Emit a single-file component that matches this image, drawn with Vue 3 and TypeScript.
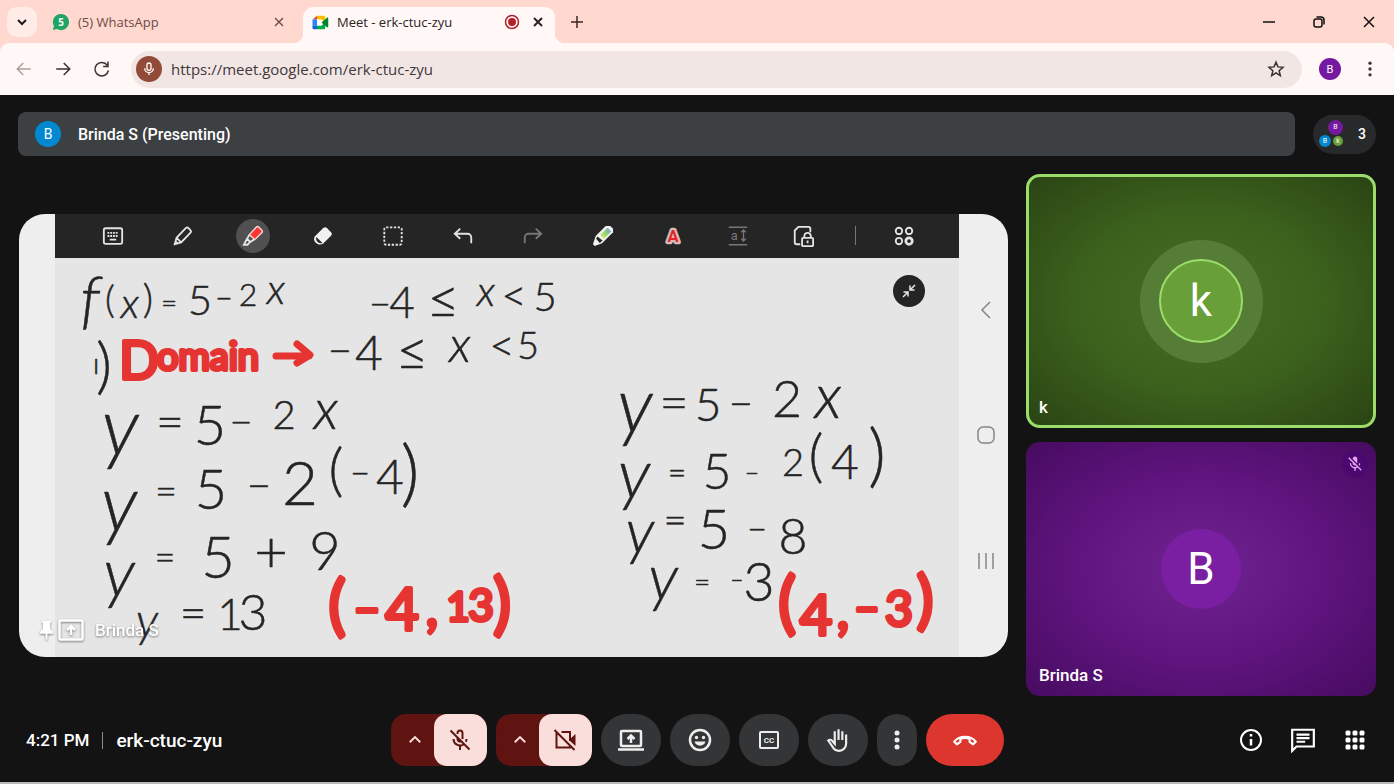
<script setup lang="ts">
import { ref } from 'vue'

type Glyph = [text: string, x: number, y: number, size: number]

const address = ref('https://meet.google.com/erk-ctuc-zyu')

// Pen strokes of the board: character, centre, baseline, size
const ink: Glyph[] = [
  ['f', 90, 322, 64], ['(', 110, 313, 38], ['x', 130, 318, 42], [')', 148, 313, 40], ['=', 169, 313, 28],
  ['5', 200, 315, 42], ['−', 224, 309, 30], ['2', 248, 306, 32], ['x', 276, 304, 42],
  ['−', 380, 317, 38], ['4', 402, 318, 44], ['≤', 443, 318, 56], ['x', 486, 306, 42], ['<', 514, 311, 44], ['5', 545, 311, 40],
  ['ı', 96, 374, 30], [')', 104, 387, 62],
  ['−', 340, 365, 42], ['4', 369, 370, 48], ['≤', 412, 370, 56], ['x', 460, 362, 50], ['<', 502, 361, 44], ['5', 528, 359, 38],
  ['y', 120, 455, 80], ['=', 170, 438, 48], ['5', 210, 445, 56], ['−', 241, 436, 40], ['2', 284, 429, 40], ['x', 326, 429, 56],
  ['y', 119, 531, 78], ['=', 166, 504, 38], ['5', 211, 509, 56], ['−', 259, 500, 42], ['2', 300, 505, 62],
  ['(', 336, 490, 58], ['−', 360, 485, 34], ['4', 390, 494, 48], [')', 410, 498, 72],
  ['y', 119, 596, 68], ['=', 165, 570, 36], ['5', 218, 578, 58], ['+', 271, 572, 58], ['9', 325, 570, 54],
  ['y', 147, 637, 48], ['=', 193, 629, 46], ['1', 230, 630, 44], ['3', 253, 630, 50],
  ['y', 635, 432, 76], ['=', 674, 420, 50], ['5', 708, 421, 46], ['−', 741, 418, 42], ['2', 787, 417, 52], ['x', 828, 418, 62],
  ['y', 634, 498, 70], ['=', 677, 484, 32], ['5', 717, 489, 50], ['−', 752, 481, 24], ['2', 793, 476, 38],
  ['(', 816, 476, 58], ['4', 845, 479, 48], [')', 877, 479, 68],
  ['y', 640, 553, 62], ['=', 675, 534, 40], ['5', 714, 549, 56], ['−', 757, 541, 34], ['8', 793, 554, 50],
  ['y', 663, 600, 64], ['=', 702, 592, 28], ['−', 737, 588, 22], ['3', 759, 601, 54],
]

const marker: Glyph[] = [
  ['D', 139, 379, 52], ['omain', 208, 370, 38],
  ['(', 337, 628, 66], ['−', 367, 626, 44], ['4', 402, 630, 58], [',', 432, 626, 54], ['1', 458, 621, 40], ['3', 481, 621, 44], [')', 502, 627, 68],
  ['(', 787, 626, 68], ['4', 816, 635, 56], [',', 843, 629, 54], ['−', 867, 624, 42], ['3', 899, 626, 48], [')', 925, 622, 64],
]

const cursive = (t: string): boolean => t === 'x' || t === 'y' || t === 'f'
const dots = [5, 12, 19]
</script>

<template>
  <div class="window">
    <header class="tabs">
      <button class="tab-search" aria-label="Search tabs">
        <svg viewBox="0 0 24 24" class="i16"><path d="M6 9l6 6 6-6" class="ln w3" /></svg>
      </button>
      <div class="tab">
        <svg viewBox="0 0 20 20" class="i18"><path d="M10 1a9 9 0 1 1-4.400 16.900L1 19l1.200-4.500A9 9 0 0 1 10 1z" fill="#1fa463" /><text x="10" y="14" class="badge-num">5</text></svg>
        <span class="tab-title">(5) WhatsApp</span>
        <button class="plain" aria-label="Close WhatsApp"><svg viewBox="0 0 24 24" class="i16"><path d="M6 6l12 12M18 6L6 18" class="ln" /></svg></button>
      </div>
      <div class="tab active">
        <svg viewBox="0 0 24 20" class="meet-logo">
          <path d="M2 6l6-5v5z" fill="#ea4335" /><path d="M8 1h9a2 2 0 0 1 2 2v7l-5-4H8z" fill="#fbbc04" />
          <path d="M2 6h6v8H2z" fill="#2684fc" /><path d="M2 14h6v5H4a2 2 0 0 1-2-2z" fill="#0066da" />
          <path d="M8 14h6l5-4v7a2 2 0 0 1-2 2H8z" fill="#00ac47" /><path d="M14 10l7-6c1-1 2-.5 2 .7v10.600c0 1.200-1 1.700-2 .7z" fill="#00832d" /><path d="M8 6h6v8H8z" fill="#fff" />
        </svg>
        <span class="tab-title">Meet - erk-ctuc-zyu</span>
        <svg viewBox="0 0 16 16" class="i16 rec"><circle cx="8" cy="8" r="6.500" fill="none" stroke="#b3202c" stroke-width="1.500" /><circle cx="8" cy="8" r="4" fill="#b3202c" /></svg>
        <button class="plain" aria-label="Close Meet"><svg viewBox="0 0 24 24" class="i16"><path d="M6 6l12 12M18 6L6 18" class="ln w3" /></svg></button>
      </div>
      <button class="plain new-tab" aria-label="New tab"><svg viewBox="0 0 24 24" class="i18"><path d="M12 4v16M4 12h16" class="ln" /></svg></button>
      <div class="win-controls">
        <button class="plain" aria-label="Minimize"><svg viewBox="0 0 16 16" class="i16"><path d="M2 8h12" class="ln thin" /></svg></button>
        <button class="plain" aria-label="Restore"><svg viewBox="0 0 16 16" class="i16"><rect x="3" y="5" width="8" height="8" rx="2" class="ln thin" /><path d="M5.500 3H10a3 3 0 0 1 3 3v4.500" class="ln thin" /></svg></button>
        <button class="plain" aria-label="Close window"><svg viewBox="0 0 16 16" class="i16"><path d="M3 3l10 10M13 3L3 13" class="ln thin" /></svg></button>
      </div>
    </header>

    <nav class="toolbar">
      <button class="plain faded" aria-label="Back"><svg viewBox="0 0 24 24" class="i18"><path d="M21 12H4M11 4l-8 8 8 8" class="ln" /></svg></button>
      <button class="plain" aria-label="Forward"><svg viewBox="0 0 24 24" class="i18"><path d="M3 12h17M13 4l8 8-8 8" class="ln" /></svg></button>
      <button class="plain" aria-label="Reload"><svg viewBox="0 0 24 24" class="i18"><path d="M19 7a9 9 0 1 0 1.500 7M20 2v6.500h-6.500" class="ln" /></svg></button>
      <div class="address">
        <button class="mic-chip" aria-label="Microphone in use"><svg viewBox="0 0 24 24" class="i18"><rect x="9" y="3" width="6" height="11" rx="3" class="ln" /><path d="M5.500 11a6.500 6.500 0 0 0 13 0M12 17.500V21" class="ln" /></svg></button>
        <input v-model="address" type="text" aria-label="Address" />
        <button class="plain" aria-label="Bookmark"><svg viewBox="0 0 24 24" class="i18"><path d="M12 3l2.600 6.200 6.700.6-5.100 4.400 1.500 6.600-5.700-3.500-5.700 3.500 1.500-6.600-5.100-4.400 6.700-.6z" class="ln" /></svg></button>
      </div>
      <button class="profile" aria-label="Profile">B</button>
      <button class="plain" aria-label="Browser menu"><svg viewBox="0 0 24 24" class="i20 solid"><circle v-for="d in dots" :key="d" cx="12" :cy="d" r="2" /></svg></button>
    </nav>

    <main class="meet">
      <div class="top">
        <div class="presenting"><span class="face">B</span><span>Brinda S (Presenting)</span></div>
        <button class="people">
          <span class="cluster"><i class="c1">B</i><i class="c2">B</i><i class="c3">k</i></span>
          <span>3</span>
        </button>
      </div>

      <div class="content">
        <section class="stage">
          <div class="screen">
            <div class="board">
              <div class="tools">
                <button class="plain" aria-label="Keyboard"><svg viewBox="0 0 24 24" class="i24"><rect x="2" y="3.500" width="20" height="17" rx="2" class="ln" /><path d="M6 8.500h12M6 12h12" class="ln dash" /><path d="M8.500 16h7" class="ln" /></svg></button>
                <button class="plain" aria-label="Pen"><svg viewBox="0 0 24 24" class="i24"><path d="M3 21l2-7L15 3.500c1-1 2-1 3 0l2 2c1 1 1 2 0 3L10 19zM5 14l5 5M3.500 20l2-2" class="ln" /></svg></button>
                <button class="plain picked" aria-label="Highlighter"><svg viewBox="0 0 24 24" class="i24"><path d="M8 10.500l7.500-8c1-1 2-1 3 0l3 3c1 1 1 2 0 3L14 16z" fill="#ff3433" stroke="#f4dada" stroke-width="1.500" /><path d="M8 11l-2.500 4 3.500 3.500 4.500-3M5.500 15L2 21.500h4l3-3" class="ln" /></svg></button>
                <button class="plain" aria-label="Eraser"><svg viewBox="0 0 24 24" class="i24"><path d="M3 12.500L12 3.500c1.500-1.500 3-1.500 4.500 0l4 4c1.500 1.500 1.500 3 0 4.500L12 20.500c-5.500 3-12-3-9-8z" fill="#f1f1f1" /><path d="M4.800 13l6.500 6.500c-4 1.500-8-2.500-6.500-6.500z" fill="#252525" /></svg></button>
                <button class="plain" aria-label="Select"><svg viewBox="0 0 24 24" class="i24"><rect x="2.500" y="2.500" width="19" height="19" rx="2" class="ln" stroke-dasharray="2.500 1.700" /></svg></button>
                <button class="plain" aria-label="Undo"><svg viewBox="0 0 24 24" class="i24"><path d="M9 4L3 9.500 9 15M3 9.500h14a4 4 0 0 1 4 4V20" class="ln" /></svg></button>
                <button class="plain dim" aria-label="Redo"><svg viewBox="0 0 24 24" class="i24"><path d="M15 4l6 5.500-6 5.500M21 9.500H7a4 4 0 0 0-4 4V20" class="ln" /></svg></button>
                <button class="plain" aria-label="Straighten"><svg viewBox="0 0 24 24" class="i24">
                  <defs><linearGradient id="tip" x1="0" y1="1" x2="1" y2="0"><stop offset="0" stop-color="#e5f36a" /><stop offset=".5" stop-color="#8ed66b" /><stop offset="1" stop-color="#7c8cff" /></linearGradient></defs>
                  <path d="M1 21l3-9L13 3l2-2h5l3 3v4L11 20l-8 3z" fill="#f1f1f1" /><path d="M9 11l8-8 4 4-8 8z" fill="url(#tip)" /><path d="M6 12.500l5.500 4.500-3 2.500L4.500 15z" fill="#252525" /></svg></button>
                <button class="plain" aria-label="Text style"><svg viewBox="0 0 24 24" class="i24"><text x="12" y="19" class="letter-a">A</text></svg></button>
                <button class="plain dim" aria-label="Align text"><svg viewBox="0 0 24 24" class="i24"><path d="M2 2.500h20M2 21.500h20M18 6v11M15.500 8L18 5.500 20.500 8M15.500 15l2.500 2.500 2.500-2.500" class="ln thin" /><text x="8" y="16" class="small-a">a</text></svg></button>
                <button class="plain" aria-label="Lock page"><svg viewBox="0 0 24 24" class="i24"><path d="M20 8V4a2 2 0 0 0-2-2H7L3 6v13a2 2 0 0 0 2 2h4" class="ln" /><rect x="11" y="14" width="12" height="9" rx="1" class="ln" /><path d="M13.500 14v-2a3.500 3.500 0 0 1 7 0v2M17 17v3" class="ln" /></svg></button>
                <span class="rule"></span>
                <button class="plain" aria-label="More tools"><svg viewBox="0 0 24 24" class="i24"><circle cx="6.500" cy="6.500" r="3.500" class="ln" /><circle cx="17.500" cy="6.500" r="3.500" class="ln" /><circle cx="6.500" cy="17.500" r="3.500" class="ln" /><circle cx="17.500" cy="17.500" r="3.500" class="ln w3" /></svg></button>
              </div>
              <svg class="canvas" viewBox="55 258 904 399">
                <g class="ink"><text v-for="(g, i) in ink" :key="i" :x="g[1]" :y="g[2]" :font-size="g[3]" :class="{ cursive: cursive(g[0]) }">{{ g[0] }}</text></g>
                <g class="marker">
                  <text v-for="(g, i) in marker" :key="i" :x="g[1]" :y="g[2]" :font-size="g[3]">{{ g[0] }}</text>
                  <path d="M276 356h33M297 344l13 11-13 8" />
                </g>
                <circle cx="909" cy="291" r="16" fill="#242424" />
                <path d="M915 285l-5 5m0-4.500v4.500h4.500M903 297l5-5m0 4.500V292h-4.500" fill="none" stroke="#e8e8e8" stroke-width="1.500" />
              </svg>
            </div>
            <div class="phone-nav">
              <button class="plain" aria-label="Back"><svg viewBox="0 0 24 24" class="i24"><path d="M16 4l-8 8 8 8" class="ln thin" /></svg></button>
              <button class="plain" aria-label="Home"><svg viewBox="0 0 24 24" class="i24"><rect x="4" y="4" width="16" height="16" rx="5" class="ln thin" /></svg></button>
              <button class="plain" aria-label="Recent apps"><svg viewBox="0 0 24 24" class="i24"><path d="M5 4v16M12 4v16M19 4v16" class="ln thin" /></svg></button>
            </div>
            <div class="caption">
              <svg viewBox="0 0 16 24" class="pin"><path d="M3 2h10v2h-1v7l3 3v2H9v6l-1 1-1-1v-6H1v-2l3-3V4H3z" fill="#fff" /></svg>
              <svg viewBox="0 0 26 22" class="cast"><rect x="1.500" y="1.500" width="23" height="19" rx="1" class="ln w25" /><path d="M13 16V8M9 11l4-4 4 4" class="ln w25" /></svg>
              <span>Brinda S</span>
            </div>
          </div>
        </section>
        <aside class="tiles">
          <article class="tile green"><div class="halo"><span class="avatar">k</span></div><p>k</p></article>
          <article class="tile violet">
            <span class="avatar">B</span><p>Brinda S</p>
            <span class="muted"><svg viewBox="0 0 24 24" class="i18 solid"><path d="M19 11h-1.700c0 .74-.16 1.430-.43 2.050l1.230 1.230c.56-.98.9-2.090.9-3.280zm-4.020.17c0-.06.02-.11.02-.17V5c0-1.660-1.340-3-3-3S9 3.340 9 5v.18l5.980 5.990zM4.270 3L3 4.270l6.010 6.010V11c0 1.660 1.330 3 2.990 3 .22 0 .44-.03.65-.08l1.660 1.660c-.71.33-1.500.52-2.310.52-2.760 0-5.300-2.100-5.300-5.100H5c0 3.410 2.720 6.230 6 6.720V21h2v-3.280c.91-.13 1.770-.45 2.540-.9L19.730 21 21 19.730 4.270 3z" /></svg></span>
          </article>
        </aside>
      </div>

      <footer class="bar">
        <div class="info"><span>4:21 PM</span><span class="sep"></span><span class="code">erk-ctuc-zyu</span></div>
        <div class="controls">
          <div class="split">
            <button class="more-opt" aria-label="Audio settings"><svg viewBox="0 0 24 24" class="i18"><path d="M5 15l7-7 7 7" class="ln w25" /></svg></button>
            <button class="off" aria-label="Turn on microphone"><svg viewBox="0 0 24 24" class="i24"><path d="M9.500 6V5a2.500 2.500 0 0 1 5 0v6M9.500 9.500V11a2.500 2.500 0 0 0 3.500 2.300M5.500 11a6.500 6.500 0 0 0 10 5.500M18.500 11c0 1-.3 2-.7 2.800M12 17.500V22M2.500 2.500l19 19" class="ln" /></svg></button>
          </div>
          <div class="split">
            <button class="more-opt" aria-label="Video settings"><svg viewBox="0 0 24 24" class="i18"><path d="M5 15l7-7 7 7" class="ln w25" /></svg></button>
            <button class="off" aria-label="Turn on camera"><svg viewBox="0 0 24 24" class="i24"><path d="M8.500 4H17v9M3.500 4v15.500H17V18M1.500 2l20 20" class="ln" /><path d="M17 11l5.500-5v12L17 13z" fill="currentColor" /></svg></button>
          </div>
          <button class="round" aria-label="Present now"><svg viewBox="0 0 28 24" class="wide"><rect x="4" y="3" width="20" height="15" rx="1" class="ln w25" /><path d="M14 15V8M10.500 11L14 7.500l3.500 3.500M1 21.500h26" class="ln w25" /></svg></button>
          <button class="round" aria-label="Reactions"><svg viewBox="0 0 24 24" class="i24"><circle cx="12" cy="12" r="10" class="ln w25" /><circle cx="8.500" cy="9.500" r="1.700" fill="currentColor" /><circle cx="15.500" cy="9.500" r="1.700" fill="currentColor" /><path d="M6.500 13.500h11c-1 5.500-10 5.500-11 0z" fill="currentColor" /></svg></button>
          <button class="round" aria-label="Captions"><svg viewBox="0 0 24 24" class="i24"><rect x="3" y="4" width="18" height="16" rx="1" class="ln" /><text x="12" y="15" class="cc">CC</text></svg></button>
          <button class="round" aria-label="Raise hand"><svg viewBox="0 0 24 24" class="i26"><path d="M9 12V4M12.500 12V2M16 12V4M19.500 7v8.500a6.500 6.500 0 0 1-6.500 6.500c-3.300 0-5-1.700-6.200-4L3 12.500c1.500-1.300 3-.8 4 .7l2 2.300V4" class="ln" /></svg></button>
          <button class="round slim" aria-label="More options"><svg viewBox="0 0 24 24" class="i24 solid"><circle v-for="d in dots" :key="d" cx="12" :cy="d" r="2.500" /></svg></button>
          <button class="round leave" aria-label="Leave call"><svg viewBox="0 0 24 24" class="i26"><path d="M2 13.500C7 7.500 17 7.500 22 13.500L19.500 16l-3.200-2.200V11c-2.500-1-6.100-1-8.600 0v2.800L4.500 16z" class="ln" stroke-linejoin="round" /></svg></button>
        </div>
        <div class="side">
          <button class="plain" aria-label="Meeting details"><svg viewBox="0 0 24 24" class="i24"><circle cx="12" cy="12" r="10" class="ln" /><path d="M12 11v6.500M12 6v2.500" class="ln w25" /></svg></button>
          <button class="plain" aria-label="Chat"><svg viewBox="0 0 24 24" class="i26"><path d="M2 22V2.500h20V18H6zM6 7h12M6 10.300h12M6 13.600h8" class="ln" /></svg></button>
          <button class="plain" aria-label="Activities"><svg viewBox="0 0 24 24" class="i24 solid"><template v-for="a in dots" :key="a"><rect v-for="b in dots" :key="b" :x="a - 2.500" :y="b - 2.500" width="5" height="5" rx="1.500" /></template></svg></button>
        </div>
      </footer>
    </main>
  </div>
</template>

<style>
body { margin: 0; background: #131314; }
</style>

<style scoped>
* { box-sizing: border-box; }
.window { display: flex; flex-direction: column; min-height: 100vh; background: #ffd9d0; font-family: Roboto, "Open Sans", sans-serif; border-bottom: 2px solid #b8b8b8; }
button { border: 0; padding: 0; color: inherit; font: inherit; display: flex; align-items: center; justify-content: center; cursor: pointer; }
svg { display: block; flex: none; }
.plain { background: none; }
.ln { fill: none; stroke: currentColor; stroke-width: 2; }
.thin { stroke-width: 1.5; }
.w25 { stroke-width: 2.5; }
.w3 { stroke-width: 3; }
.dash { stroke-dasharray: 2 1; }
.solid { fill: currentColor; }
.i16 { width: 16px; height: 16px; }
.i18 { width: 18px; height: 18px; }
.i20 { width: 20px; height: 20px; }
.i24 { width: 24px; height: 24px; }
.i26 { width: 26px; height: 26px; }
.wide { width: 28px; height: 24px; }

.tabs { display: flex; height: 43px; padding: 7px 17px 0 7px; font-family: "Open Sans", sans-serif; font-size: 13px; color: #3b2623; }
.tab-search { width: 30px; height: 30px; border-radius: 10px; background: #ffece7; color: #1f1a19; }
.tab { display: flex; align-items: center; width: 252px; height: 30px; padding: 0 12px; margin-left: 3px; color: #6b4b45; }
.tab .tab-title { flex: 1; margin-left: 8px; white-space: nowrap; }
.tab:not(.active) { width: 263px; padding-right: 16px; }
.tab.active { position: relative; margin-left: 0; width: 252px; height: 36px; padding: 0 9px 6px 8px; border-radius: 10px 10px 0 0; background: #fff8f6; color: #2c2322; }
.tab.active::before, .tab.active::after { content: ""; position: absolute; bottom: 0; width: 9px; height: 9px; }
.tab.active::before { left: -9px; background: radial-gradient(circle at 0 0, transparent 9px, #fff8f6 9px); }
.tab.active::after { right: -9px; background: radial-gradient(circle at 100% 0, transparent 9px, #fff8f6 9px); }
.badge-num { fill: #fff; font-size: 11px; font-weight: 700; text-anchor: middle; }
.meet-logo { width: 18px; height: 15px; }
.rec { margin-right: 10px; }
.new-tab { height: 30px; margin-left: 13px; }
.win-controls { display: flex; gap: 34px; height: 30px; margin-left: auto; color: #111; }

.toolbar { display: flex; align-items: center; gap: 21px; height: 52px; padding: 0 14px 0 15px; border-radius: 9px 9px 0 0; background: #fff8f6; color: #3c302e; }
.faded { color: #aaa09e; }
.address { display: flex; align-items: center; flex: 1; height: 37px; margin-left: -1px; padding: 0 17px 0 5px; border-radius: 19px; background: #f2e6e5; }
.address input { flex: 1; min-width: 0; border: 0; outline: 0; margin-left: 9px; padding: 0; background: none; font: 15px "Open Sans", sans-serif; color: #40383a; }
.mic-chip { width: 26px; height: 26px; border-radius: 50%; background: #914b38; color: #fff; }
.mic-chip svg { width: 16px; height: 16px; }
.profile { width: 22px; height: 22px; margin-left: -4px; border-radius: 50%; background: #751aa0; color: #fff; font-size: 11px; }
.profile + .plain { margin-left: -2px; }

.meet { display: flex; flex-direction: column; flex: 1; padding: 17px 18px 16px; background: #131314; color: #fff; font-size: 16px; font-weight: 500; }
.top { display: flex; align-items: center; gap: 18px; margin-bottom: 18px; }
.presenting { display: flex; align-items: center; gap: 17px; flex: 1; height: 44px; padding: 0 17px; border-radius: 8px; background: #3c4043; }
.face { width: 26px; height: 26px; border-radius: 50%; background: #0288d1; font-size: 14px; line-height: 26px; text-align: center; font-weight: 400; }
.people { width: 63px; height: 39px; gap: 14px; padding-right: 4px; border-radius: 20px; background: #28292b; font-size: 14px; }
.cluster { position: relative; width: 25px; height: 28px; }
.cluster i { position: absolute; border-radius: 50%; font-style: normal; font-weight: 400; text-align: center; font-size: 7px; }
.c1 { left: 9px; top: 0; width: 15px; height: 15px; line-height: 15px; background: #751aa0; }
.c2 { left: 0; top: 15px; width: 12px; height: 12px; line-height: 12px; background: #0288d1; }
.c3 { left: 14px; top: 16px; width: 10px; height: 10px; line-height: 10px; background: #689f38; }

.content { display: grid; grid-template-columns: minmax(0, 1fr) 350px; gap: 18px; flex: 1; }
.stage { display: flex; align-items: center; padding-left: 1px; }
.screen { position: relative; display: flex; width: 100%; padding-left: 36px; border-radius: 26px; overflow: hidden; background: #eee; }
.board { flex: 1; min-width: 0; background: #e5e5e5; }
.tools { display: grid; grid-template-columns: repeat(9, 70fr) 60fr 70fr 34fr 64fr; align-items: center; justify-items: center; height: 44px; padding: 0 23px; background: #252525; color: #e4e4e4; }
.tools svg { width: 22px; height: 22px; }
.tools .dim { color: #777; }
.picked { width: 34px; height: 34px; border-radius: 50%; background: #505050; }
.rule { width: 1px; height: 19px; background: #777; }
.letter-a { font: 700 18px Roboto, sans-serif; text-anchor: middle; fill: #e5252a; stroke: #d8bcbc; stroke-width: 5px; paint-order: stroke; stroke-linejoin: round; }
.small-a { font: 14px Roboto, sans-serif; text-anchor: middle; fill: currentColor; }
.cc { font: 700 8px Roboto, sans-serif; text-anchor: middle; fill: currentColor; }
.canvas { width: 100%; height: auto; }
.canvas text { text-anchor: middle; font-family: Lato, sans-serif; }
.ink text { font-weight: 300; fill: #252525; stroke: #252525; stroke-width: 0.5px; stroke-linejoin: round; }
.ink .cursive { font-style: italic; }
.marker text { font-weight: 400; fill: #e53431; stroke: #e53431; stroke-width: 4px; stroke-linejoin: round; }
.marker path { fill: none; stroke: #e53431; stroke-width: 7px; stroke-linecap: round; stroke-linejoin: round; }
.phone-nav { display: flex; flex-direction: column; justify-content: space-between; align-items: center; width: 49px; padding: 84px 0; color: #858585; }
.phone-nav svg { margin-left: 5px; }
.caption { position: absolute; left: 20px; bottom: 16px; display: flex; align-items: center; gap: 4px; font-size: 17px; filter: drop-shadow(0 1px 1px #0007); }
.caption span { margin-left: 7px; }
.pin { width: 15px; height: 22px; }
.cast { width: 26px; height: 22px; }

.tiles { display: grid; grid-template-rows: 1fr 1fr; gap: 14px; }
.tile { position: relative; display: flex; align-items: center; justify-content: center; border-radius: 14px; }
.tile p { position: absolute; left: 13px; bottom: 11px; margin: 0; font-size: 17px; line-height: 20px; }
.green { border: 3px solid #9bdc6b; background: radial-gradient(ellipse at center, #456d25 0%, #3c611d 50%, #2a4413 100%); }
.tile.green p { left: 10px; bottom: 8px; }
.violet { background: radial-gradient(ellipse at center, #702391 0%, #5f157f 50%, #470b60 100%); }
.avatar { display: flex; align-items: center; justify-content: center; width: 80px; height: 80px; border-radius: 50%; background: #7b1fa2; font-size: 44px; font-weight: 400; }
.halo { display: flex; align-items: center; justify-content: center; width: 123px; height: 123px; border-radius: 50%; background: #567d35; }
.halo .avatar { width: 84px; height: 84px; border: 2px solid #9bdc6b; background: #689f38; }
.muted { position: absolute; right: 8px; top: 9px; display: flex; align-items: center; justify-content: center; width: 26px; height: 26px; border-radius: 50%; background: #4b0870; color: #e5a6f3; }

.bar { display: grid; grid-template-columns: 1fr auto 1fr; align-items: center; margin-top: 18px; }
.info { display: flex; align-items: center; gap: 13px; padding-left: 8px; font-size: 17px; }
.code { font-size: 19px; }
.sep { width: 1px; height: 17px; background: #8a8a8a; }
.controls { display: flex; gap: 9px; }
.split { display: flex; border-radius: 15px; background: #5f1412; overflow: hidden; }
.more-opt { width: 43px; padding-left: 6px; background: none; color: #f9dedc; }
.off { width: 53px; height: 52px; border-radius: 13px; background: #f9dedc; color: #601410; }
.round { width: 60px; height: 52px; border-radius: 26px; background: #333537; color: #eee; }
.slim { width: 40px; }
.leave { width: 78px; background: #dc362e; color: #fff; }
.side { display: flex; justify-content: flex-end; align-items: center; gap: 27px; padding-right: 9px; }
</style>
